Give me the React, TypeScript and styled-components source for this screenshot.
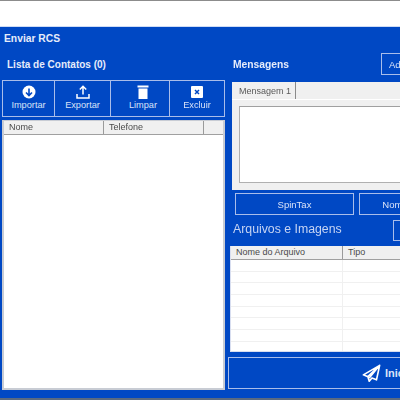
import * as React from 'react'
import styled, { createGlobalStyle } from 'styled-components'

const GlobalStyle = createGlobalStyle`
  html, body {
    margin: 0;
    padding: 0;
    width: 400px;
    height: 400px;
    overflow: hidden;
    background: #fff;
    font-family: "Liberation Sans", Arial, sans-serif;
  }
`

const Screen = styled.div`
  width: 400px;
  height: 400px;
  display: flex;
  flex-direction: column;
  overflow: hidden;
  background: #fff;
  border-top: 1px solid #8c8c8c;
  border-bottom: 2px solid #5a6a80;
  box-sizing: border-box;
`

const TopGap = styled.div`
  height: 25px;
  flex: none;
`

const Form = styled.div`
  flex: 1;
  min-height: 0;
  background: #0048c4;
  border-top: 1px solid #cfdcf5;
  padding: 6px 0 0 2px;
  display: flex;
  flex-direction: column;
  filter: blur(0.3px);
`

const Title = styled.div`
  color: #e6ecfa;
  font-size: 10.3px;
  font-weight: bold;
  line-height: 12px;
  padding-left: 2px;
  height: 16px;
  flex: none;
`

const Columns = styled.div`
  flex: 1;
  min-height: 0;
  display: flex;
  gap: 2px;
`

const LeftColumn = styled.div`
  width: 223px;
  flex: none;
  display: flex;
  flex-direction: column;
`

const RightColumn = styled.div`
  width: 260px;
  flex: none;
  display: flex;
  flex-direction: column;
`

const SectionLabel = styled.div`
  color: #e6ecfa;
  font-size: 10px;
  font-weight: bold;
  line-height: 12px;
  padding: 10px 0 0 5px;
  height: 31px;
  box-sizing: border-box;
  flex: none;
`

const Toolbar = styled.div`
  display: flex;
  height: 37px;
  flex: none;
`

const ToolButton = styled.button<{ $w: number; $pad: number }>`
  width: ${p => p.$w}px;
  flex: none;
  box-sizing: border-box;
  background: #0048c4;
  border: 1px solid #a9bdea;
  margin-left: -1px;
  &:first-child { margin-left: 0; }
  color: #d9e3f8;
  font-family: inherit;
  font-size: 9.2px;
  padding: 4px 0 0 ${p => p.$pad}px;
  display: flex;
  flex-direction: column;
  align-items: center;
  line-height: 12px;
`

const IconBox = styled.svg`
  width: 14px;
  height: 14px;
  display: block;
`

const ContactList = styled.div`
  margin-top: 3px;
  flex: none;
  height: 270px;
  background: #fff;
  border: 2px solid #c8ccd4;
  border-width: 1px 2px 2px 2px;
  box-sizing: border-box;
`

const HeaderRow = styled.div`
  display: flex;
  height: 14px;
  background: #f0f0f0;
  border-bottom: 1px solid #a0a0a0;
  box-sizing: border-box;
`

const HeaderCell = styled.div<{ $w: number }>`
  width: ${p => p.$w}px;
  flex: none;
  box-sizing: border-box;
  border-right: 1px solid #9a9a9a;
  padding-left: 5px;
  color: #4a4a4a;
  font-size: 9px;
  line-height: 13px;
`

const MessagesHead = styled.div`
  height: 33px;
  flex: none;
  display: flex;
  justify-content: space-between;
  padding-left: 6px;
`

const MessagesLabel = styled.div`
  color: #e6ecfa;
  font-size: 10.3px;
  font-weight: bold;
  line-height: 12px;
  padding-top: 10px;
`

const OutlineButton = styled.button<{ $w: number }>`
  width: ${p => p.$w}px;
  flex: none;
  box-sizing: border-box;
  background: #0048c4;
  border: 1px solid #a9bdea;
  color: #d9e3f8;
  font-family: inherit;
  font-size: 9.5px;
  padding: 0;
  text-align: center;
`

const AddButton = styled(OutlineButton)`
  height: 22px;
  margin-top: 4px;
  margin-left: auto;
  text-align: left;
  padding-left: 7px;
`

const TabPanel = styled.div`
  margin-left: 5px;
  height: 108px;
  flex: none;
  background: #f0f0f0;
  display: flex;
  flex-direction: column;
`

const TabStrip = styled.div`
  height: 18px;
  flex: none;
  display: flex;
  border-bottom: 1px solid #fff;
  box-sizing: border-box;
`

const Tab = styled.div`
  width: 64px;
  box-sizing: border-box;
  border-right: 1px solid #8a8a8a;
  color: #5a5a5a;
  font-size: 9px;
  line-height: 15px;
  padding: 2px 0 0 7px;
  background: #f0f0f0;
`

const MessageBox = styled.div`
  margin: 6px 0 0 7px;
  height: 77px;
  box-sizing: border-box;
  background: #fff;
  border-top: 1px solid #a0a0a0;
  border-left: 1px solid #b0b0b0;
  border-bottom: 1px solid #b0b0b0;
`

const ButtonRow = styled.div`
  display: flex;
  gap: 5px;
  margin: 3px 0 0 8px;
  height: 22px;
  flex: none;
`

const FilesHead = styled.div`
  display: flex;
  justify-content: space-between;
  height: 31px;
  flex: none;
  padding: 5px 0 0 6px;
  box-sizing: border-box;
`

const FilesLabel = styled.div`
  color: #c6d4f3;
  font-size: 12.3px;
  line-height: 14px;
  padding-top: 2px;
`

const FilesButton = styled(OutlineButton)`
  height: 21px;
`

const FileTable = styled.div`
  margin-left: 3px;
  height: 106px;
  flex: none;
  background: #fff;
  border-left: 1px solid #d8def0;
  border-bottom: 1px solid #d8def0;
  overflow: hidden;
  box-sizing: border-box;
`

const FileRow = styled.div`
  display: flex;
  height: 11.7px;
  border-bottom: 1px solid #f0f0f0;
  box-sizing: border-box;

  &:last-child {
    border-bottom: 0;
    height: 14px;
  }
`

const FileCell = styled.div`
  width: 112px;
  flex: none;
  box-sizing: border-box;
  border-right: 1px solid #f0f0f0;
`

const StartButton = styled.button`
  margin: 5px 0 0 1px;
  height: 32px;
  flex: none;
  box-sizing: border-box;
  background: #0048c4;
  border: 1px solid #a9bdea;
  color: #d9e3f8;
  font-family: inherit;
  font-size: 11px;
  font-weight: bold;
  padding: 0 0 0 133px;
  display: flex;
  align-items: center;
  gap: 4px;
`

const SendIcon = styled.svg`
  width: 19px;
  height: 19px;
  display: block;
`

const tools = [
  {
    label: 'Importar',
    w: 53,
    pad: 0,
    icon: (
      <IconBox viewBox="0 0 14 14">
        <circle cx="7" cy="7" r="6.5" fill="#fff" />
        <path d="M7 3.5v6.5M4 7.5l3 3 3-3" fill="none" stroke="#0048c4" strokeWidth="1.6" />
      </IconBox>
    ),
  },
  {
    label: 'Exportar',
    w: 57,
    pad: 0,
    icon: (
      <IconBox viewBox="0 0 14 14">
        <path d="M7 9.5V1.5M3.8 4.5L7 1.3l3.2 3.2M1 9v4h12V9" fill="none" stroke="#fff" strokeWidth="1.5" />
      </IconBox>
    ),
  },
  {
    label: 'Limpar',
    w: 60,
    pad: 6,
    icon: (
      <IconBox viewBox="0 0 14 14">
        <path d="M1.5 0.5h11v2h-11zM2.5 3.5h9v10.5h-9z" fill="#fff" />
      </IconBox>
    ),
  },
  {
    label: 'Excluir',
    w: 56,
    pad: 0,
    icon: (
      <IconBox viewBox="0 0 14 14">
        <rect x="1" y="1" width="12" height="12" rx="1" fill="#fff" />
        <path d="M5 5l4 4M9 5l-4 4" stroke="#0048c4" strokeWidth="1.5" />
      </IconBox>
    ),
  },
]

const App: React.FC = () => {
  return (
    <Screen>
      <GlobalStyle />
      <TopGap />
      <Form>
        <Title>Enviar RCS</Title>
        <Columns>
          <LeftColumn>
            <SectionLabel>Lista de Contatos (0)</SectionLabel>
            <Toolbar>
              {tools.map(t => (
                <ToolButton key={t.label} $w={t.w} $pad={t.pad}>
                  {t.icon}
                  {t.label}
                </ToolButton>
              ))}
            </Toolbar>
            <ContactList>
              <HeaderRow>
                <HeaderCell $w={100}>Nome</HeaderCell>
                <HeaderCell $w={100}>Telefone</HeaderCell>
              </HeaderRow>
            </ContactList>
          </LeftColumn>
          <RightColumn>
            <MessagesHead>
              <MessagesLabel>Mensagens</MessagesLabel>
              <AddButton $w={106}>Adicionar</AddButton>
            </MessagesHead>
            <TabPanel>
              <TabStrip>
                <Tab>Mensagem 1</Tab>
              </TabStrip>
              <MessageBox />
            </TabPanel>
            <ButtonRow>
              <OutlineButton $w={119}>SpinTax</OutlineButton>
              <OutlineButton $w={72}>Nome</OutlineButton>
            </ButtonRow>
            <FilesHead>
              <FilesLabel>Arquivos e Imagens</FilesLabel>
              <FilesButton $w={94} />
            </FilesHead>
            <FileTable>
              <HeaderRow>
                <HeaderCell $w={112}>Nome do Arquivo</HeaderCell>
                <HeaderCell $w={100}>Tipo</HeaderCell>
              </HeaderRow>
              {Array.from({ length: 8 }).map((_, i) => (
                <FileRow key={i}>
                  <FileCell />
                </FileRow>
              ))}
            </FileTable>
            <StartButton>
              <SendIcon viewBox="0 0 21 21">
                <path d="M19.5 1.5L1.5 12l5 2 1.5 5 3-3.5 5 2zM6.5 14L19.5 1.5 8 15.5" fill="none" stroke="#fff" strokeWidth="1.8" strokeLinejoin="round" />
              </SendIcon>
              Iniciar
            </StartButton>
          </RightColumn>
        </Columns>
      </Form>
    </Screen>
  )
}

export default App
